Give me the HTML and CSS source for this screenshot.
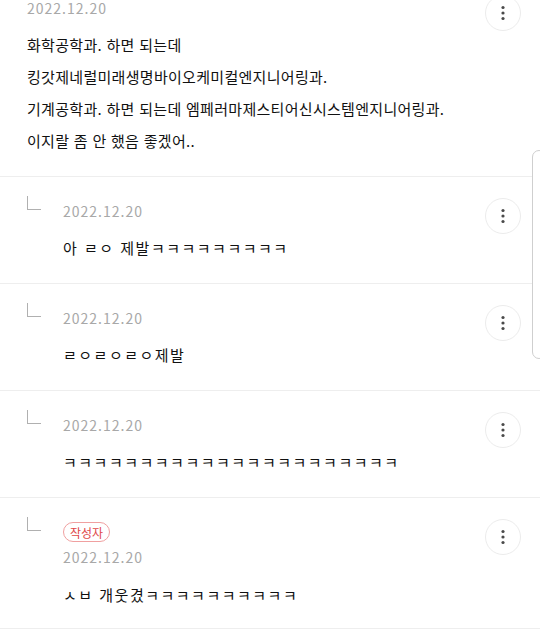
FILE: index.html
```html
<!DOCTYPE html>
<html lang="ko">
<head>
<meta charset="utf-8">
<link rel="stylesheet" href="styles.css">
</head>
<body>
<div class="list">
  <div class="comment top">
    <div class="body">
      <div class="date">2022.12.20</div>
      <div class="text">화학공학과. 하면 되는데<br>킹갓제네럴미래생명바이오케미컬엔지니어링과.<br>기계공학과. 하면 되는데 엠페러마제스티어신시스템엔지니어링과.<br>이지랄 좀 안 했음 좋겠어..</div>
    </div>
    <button class="more" aria-label="더보기"><svg width="6" height="16" viewBox="0 0 6 16"><circle cx="3" cy="2.5" r="1.6"/><circle cx="3" cy="8" r="1.6"/><circle cx="3" cy="13.5" r="1.6"/></svg></button>
  </div>

  <div class="comment reply">
    <span class="elbow"></span>
    <div class="body">
      <div class="date">2022.12.20</div>
      <div class="text">아 ㄹㅇ 제발ㅋㅋㅋㅋㅋㅋㅋㅋㅋ</div>
    </div>
    <button class="more" aria-label="더보기"><svg width="6" height="16" viewBox="0 0 6 16"><circle cx="3" cy="2.5" r="1.6"/><circle cx="3" cy="8" r="1.6"/><circle cx="3" cy="13.5" r="1.6"/></svg></button>
  </div>

  <div class="comment reply">
    <span class="elbow"></span>
    <div class="body">
      <div class="date">2022.12.20</div>
      <div class="text">ㄹㅇㄹㅇㄹㅇ제발</div>
    </div>
    <button class="more" aria-label="더보기"><svg width="6" height="16" viewBox="0 0 6 16"><circle cx="3" cy="2.5" r="1.6"/><circle cx="3" cy="8" r="1.6"/><circle cx="3" cy="13.5" r="1.6"/></svg></button>
  </div>

  <div class="comment reply">
    <span class="elbow"></span>
    <div class="body">
      <div class="date">2022.12.20</div>
      <div class="text">ㅋㅋㅋㅋㅋㅋㅋㅋㅋㅋㅋㅋㅋㅋㅋㅋㅋㅋㅋㅋㅋㅋ</div>
    </div>
    <button class="more" aria-label="더보기"><svg width="6" height="16" viewBox="0 0 6 16"><circle cx="3" cy="2.5" r="1.6"/><circle cx="3" cy="8" r="1.6"/><circle cx="3" cy="13.5" r="1.6"/></svg></button>
  </div>

  <div class="comment reply last">
    <span class="elbow"></span>
    <div class="body">
      <span class="badge">작성자</span>
      <div class="date">2022.12.20</div>
      <div class="text">ㅅㅂ 개웃겼ㅋㅋㅋㅋㅋㅋㅋㅋㅋㅋ</div>
    </div>
    <button class="more" aria-label="더보기"><svg width="6" height="16" viewBox="0 0 6 16"><circle cx="3" cy="2.5" r="1.6"/><circle cx="3" cy="8" r="1.6"/><circle cx="3" cy="13.5" r="1.6"/></svg></button>
  </div>
</div>
<div class="scroller"></div>
</body>
</html>
```

FILE: styles.css
```css
html, body {
  margin: 0;
  padding: 0;
  background: #ffffff;
  overflow: hidden;
}
body {
  width: 540px;
  height: 634px;
  position: relative;
  font-family: "Noto Sans CJK KR", "Noto Sans", sans-serif;
  color: #111111;
}
.list {
  margin-top: -26px;
}
.comment {
  display: flex;
  align-items: flex-start;
  padding: 19px 19px 19px 27px;
  border-bottom: 1px solid #eeeeee;
}
.comment.last {
  padding-bottom: 17px;
}
.elbow {
  flex: none;
  width: 14px;
  height: 14px;
  margin-right: 22px;
  border-left: 1.5px solid #b0b0b0;
  border-bottom: 1.5px solid #b0b0b0;
  box-sizing: border-box;
}
.body {
  flex: 1;
  min-width: 0;
  padding-top: 5px;
  display: flex;
  flex-direction: column;
  align-items: flex-start;
}
.date {
  font-size: 14px;
  line-height: 20px;
  height: 20px;
  letter-spacing: 1px;
  color: #a8a8a8;
}
.text {
  margin-top: 11px;
  font-size: 15px;
  line-height: 32px;
  letter-spacing: 0.3px;
  color: #111111;
  white-space: nowrap;
}
.reply .text {
  letter-spacing: 1.5px;
}
.last .text {
  margin-top: 12px;
}
.badge {
  display: inline-flex;
  align-items: center;
  justify-content: center;
  height: 20px;
  padding: 0 6px;
  box-sizing: border-box;
  border: 1px solid #f0a0a0;
  border-radius: 10px;
  font-size: 12px;
  color: #e04848;
  margin-bottom: 5px;
}
.more {
  flex: none;
  width: 36px;
  height: 36px;
  margin-top: 2px;
  padding: 0;
  border: 1px solid #ececec;
  border-radius: 50%;
  background: #ffffff;
  display: flex;
  align-items: center;
  justify-content: center;
}
.more svg {
  fill: #4a4a4a;
  display: block;
}
.scroller {
  position: absolute;
  left: 532px;
  top: 150px;
  width: 14px;
  height: 209px;
  box-sizing: border-box;
  border: 1px solid #cfcfcf;
  border-radius: 8px;
  background: #ffffff;
}
```
